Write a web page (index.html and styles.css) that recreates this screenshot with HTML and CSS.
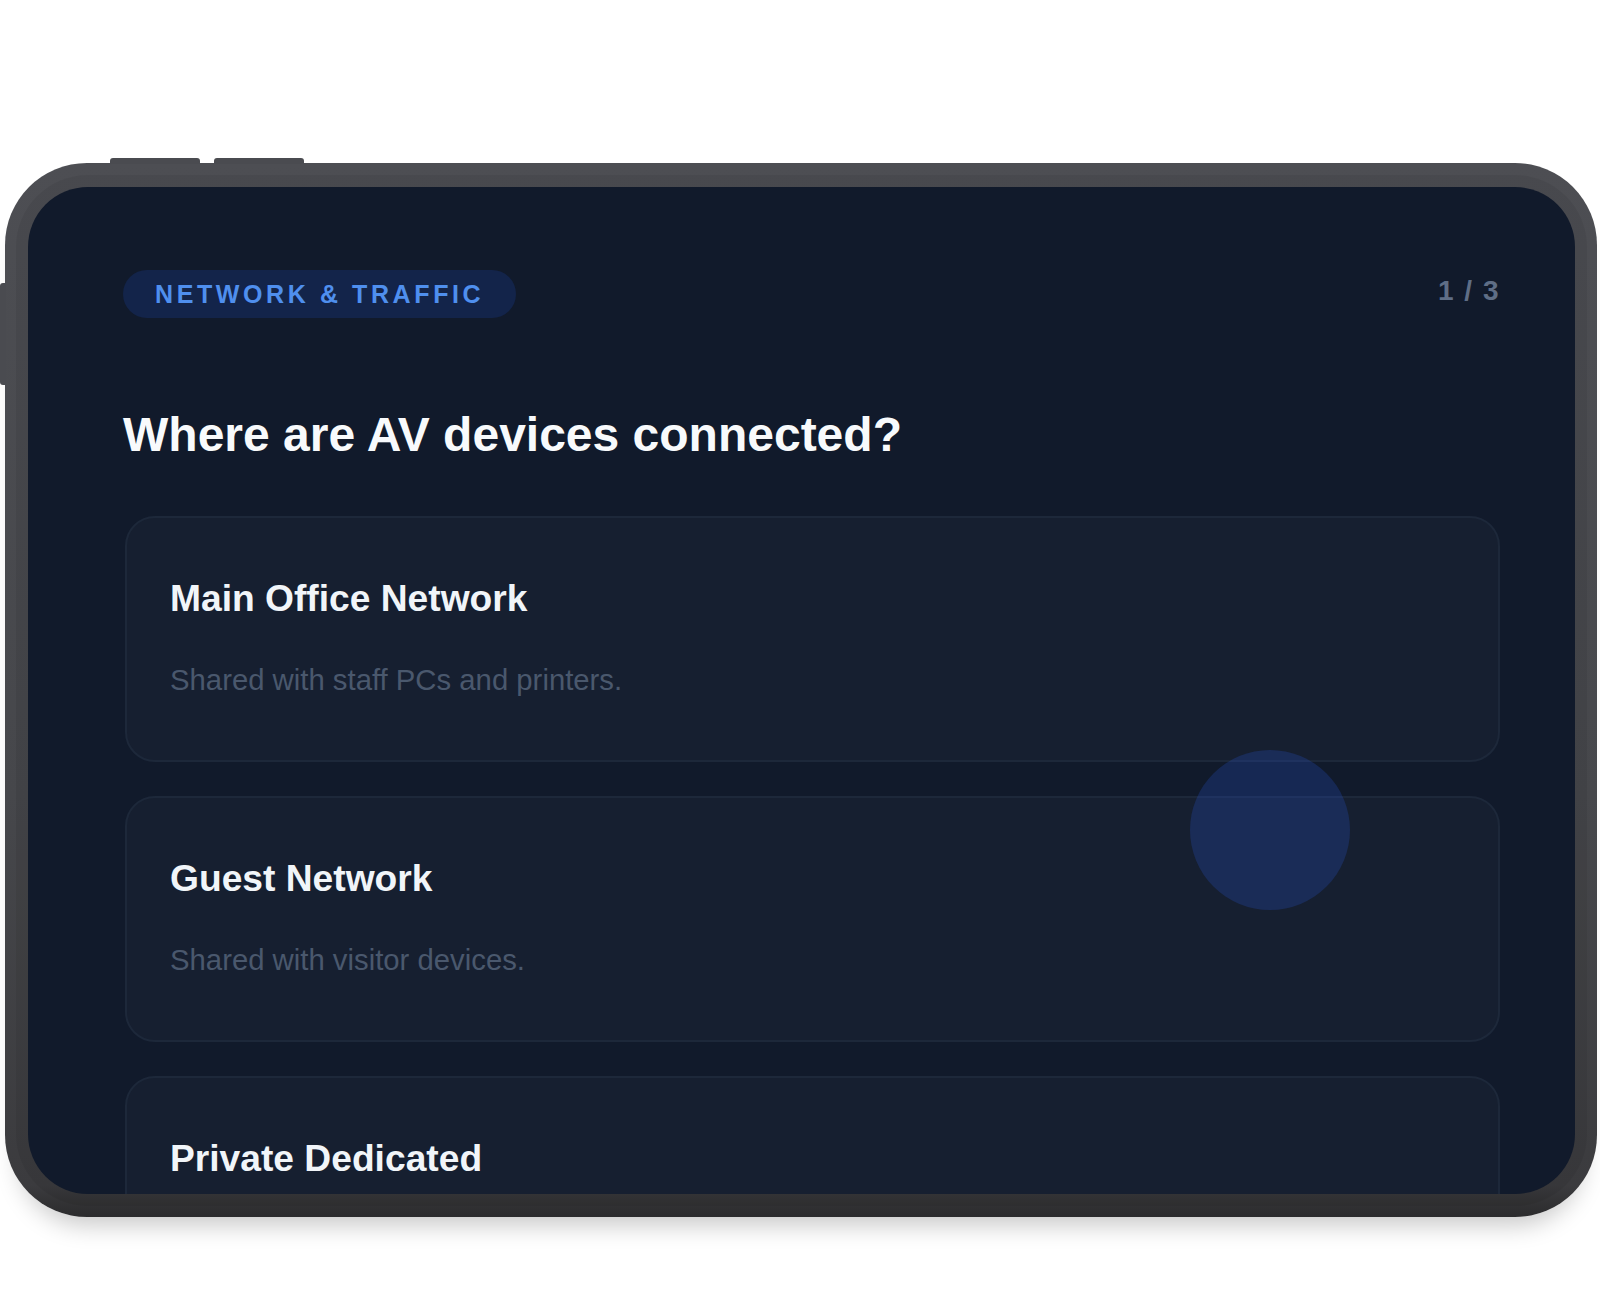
FILE: index.html
```html
<!DOCTYPE html>
<html lang="en">
<head>
    <meta charset="UTF-8">
    <meta name="viewport" content="width=device-width, initial-scale=1.0">
    <title>AV Network Survey</title>
    <link rel="stylesheet" href="styles.css">
</head>
<body>
    <div class="stage">
        <div class="tablet">
            <span class="hw-btn hw-top hw-top-1"></span>
            <span class="hw-btn hw-top hw-top-2"></span>
            <span class="hw-btn hw-side"></span>

            <div class="screen">
                <div class="screen-head">
                    <span class="badge">NETWORK &amp; TRAFFIC</span>
                    <span class="step">1 / 3</span>
                </div>

                <h1 class="question">Where are AV devices connected?</h1>

                <div class="options">
                    <div class="option">
                        <h2>Main Office Network</h2>
                        <p>Shared with staff PCs and printers.</p>
                    </div>
                    <div class="option">
                        <h2>Guest Network</h2>
                        <p>Shared with visitor devices.</p>
                    </div>
                    <div class="option">
                        <h2>Private Dedicated</h2>
                    </div>
                </div>

                <!-- tap indicator -->
                <span class="touch"></span>
            </div>
        </div>
    </div>
</body>
</html>
```

FILE: styles.css
```css
* {
    box-sizing: border-box;
    margin: 0;
    padding: 0;
}

body {
    font-family: 'Liberation Sans', Arial, sans-serif;
    background: #ffffff;
    min-height: 100vh;
    overflow: hidden;
}

.stage {
    padding: 163px 3px 0 5px;
}

.tablet {
    position: relative;
    width: 1592px;
    height: 1054px;
    padding: 24px 22px 23px 23px;
    border-radius: 82px;
    background: linear-gradient(180deg, #4d4e53 0%, #46474b 60%, #3b3b3e 97%, #2b2b2d 100%);
    box-shadow: 0 22px 24px -14px rgba(0,0,0,0.22);
}

.hw-btn {
    position: absolute;
    background-color: #4a4b50;
}

.hw-top {
    top: -5px;
    width: 90px;
    height: 6px;
    border-radius: 3px 3px 0 0;
}

.hw-top-1 {
    left: 105px;
}

.hw-top-2 {
    left: 209px;
}

.hw-side {
    left: -5px;
    top: 120px;
    width: 6px;
    height: 102px;
    border-radius: 3px 0 0 3px;
}

.screen {
    position: relative;
    height: 100%;
    overflow: hidden;
    border-radius: 60px;
    background-color: #111a2b;
    padding: 83px 75px 0 95px;
    box-shadow: 0 0 0 12px rgba(0,0,0,0.06);
}

.screen-head {
    display: flex;
    justify-content: space-between;
    align-items: center;
}

.badge {
    display: inline-block;
    height: 48px;
    line-height: 48px;
    padding: 0 32px 0 32px;
    border-radius: 24px;
    background-color: #13244a;
    color: #4f8fee;
    font-size: 25px;
    font-weight: 700;
    letter-spacing: 3.6px;
}

.step {
    color: #5f6e86;
    font-size: 28px;
    font-weight: 700;
    letter-spacing: 1.5px;
    margin-top: -6px;
}

.question {
    margin-top: 89px;
    color: #f8fafc;
    font-size: 48px;
    font-weight: 700;
}

.options {
    margin-top: 54px;
    padding-left: 2px;
    display: flex;
    flex-direction: column;
    gap: 34px;
}

.option {
    padding: 59px 43px 63px;
    border: 2px solid #1d283a;
    border-radius: 30px;
    background-color: #161f30;
}

.option h2 {
    color: #f1f5f9;
    font-size: 37.2px;
    font-weight: 700;
}

.option p {
    margin-top: 43px;
    color: #4a586d;
    font-size: 29.3px;
}

.touch {
    position: absolute;
    left: 1162px;
    top: 563px;
    width: 160px;
    height: 160px;
    border-radius: 50%;
    background-color: rgba(37, 80, 200, 0.26);
}
```
